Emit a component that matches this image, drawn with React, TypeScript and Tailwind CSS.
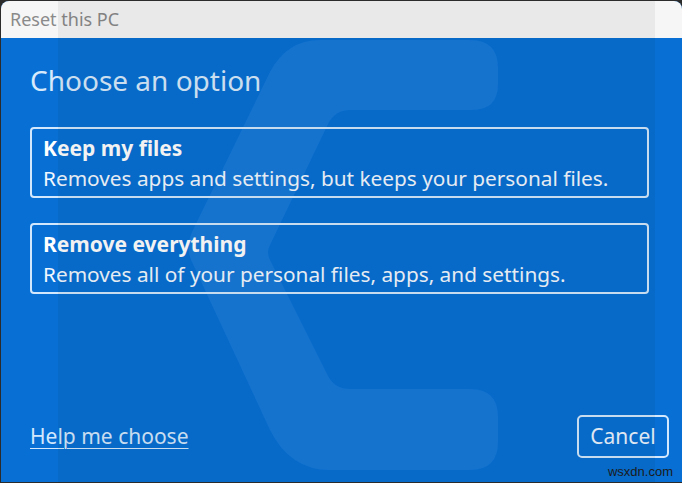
import React from "react";

export default function App() {
  const font = { fontFamily: '"Noto Sans", "Open Sans", Arial, sans-serif' };
  return (
    <div className="w-[682px] h-[483px] bg-[#2b2b2b] pl-px pb-px pt-px overflow-hidden" style={font}>
      <div className="relative w-[681px] h-[481px] rounded-t-[8px] overflow-hidden flex flex-col bg-[#0870d4]">
        {/* title bar */}
        <div className="h-[37px] shrink-0 bg-[#f6f6f6] flex items-center pl-[9px] text-[18px] text-[#8a8a8a]">
          Reset this PC
        </div>

        {/* decorative background shape */}
        <svg
          className="absolute left-[-1px] top-[-1px] pointer-events-none"
          width="682"
          height="483"
          viewBox="0 0 682 483"
        >
          <path
            d="M470 40 Q498 40 498 68 L498 84 Q498 110 472 110 L350 110 Q335 110 328 124 L270 245 Q266 252 270 260 L328 376 Q335 389 350 389 L470 389 Q498 389 498 417 L498 442 Q498 470 470 470 L330 470 Q290 470 270 430 L192 262 Q185 247 192 232 L270 72 Q287 40 320 40 Z"
            fill="#177ada"
          />
        </svg>

        {/* content */}
        <div className="relative flex-1 flex flex-col text-white">
          <div className="pl-[29px] pt-[24px] text-[28px] leading-[36px] text-[#d6eafc]">Choose an option</div>

          <div className="pl-[29px] pr-[33px] mt-[29px] flex flex-col gap-[25px]">
            <div className="h-[71px] border-2 border-[#d3e8fd] rounded-[4px] px-[11px] pt-[6px]">
              <div className="text-[21px] leading-[27px] font-bold">Keep my files</div>
              <div className="text-[20.8px] leading-[28px] mt-[2px] text-[#f2f8ff]">
                Removes apps and settings, but keeps your personal files.
              </div>
            </div>
            <div className="h-[71px] border-2 border-[#d3e8fd] rounded-[4px] px-[11px] pt-[6px]">
              <div className="text-[21px] leading-[27px] font-bold">Remove everything</div>
              <div className="text-[20.8px] leading-[28px] mt-[2px] text-[#f2f8ff]">
                Removes all of your personal files, apps, and settings.
              </div>
            </div>
          </div>

          <div className="flex-1" />

          <div className="flex items-center justify-between pl-[29px] pr-[13px] pb-[24px]">
            <span className="text-[21px] text-[#d3e8fd] underline underline-offset-[4px] decoration-1">Help me choose</span>
            <div className="w-[92px] h-[43px] border-2 border-[#d3e8fd] rounded-[5px] flex items-center justify-center text-[21px] text-[#eaf4ff]">
              Cancel
            </div>
          </div>
        </div>

        {/* screenshot band overlay */}
        <div className="absolute top-0 bottom-0 left-[57px] w-[597px] bg-black/[0.05] pointer-events-none" />

        <div
          className="absolute right-[9px] bottom-[2px] text-[13px] leading-[16px] text-[#1b1b1b]"
          style={{ fontFamily: '"Liberation Sans", Arial, sans-serif' }}
        >
          wsxdn.com
        </div>
      </div>
    </div>
  );
}
